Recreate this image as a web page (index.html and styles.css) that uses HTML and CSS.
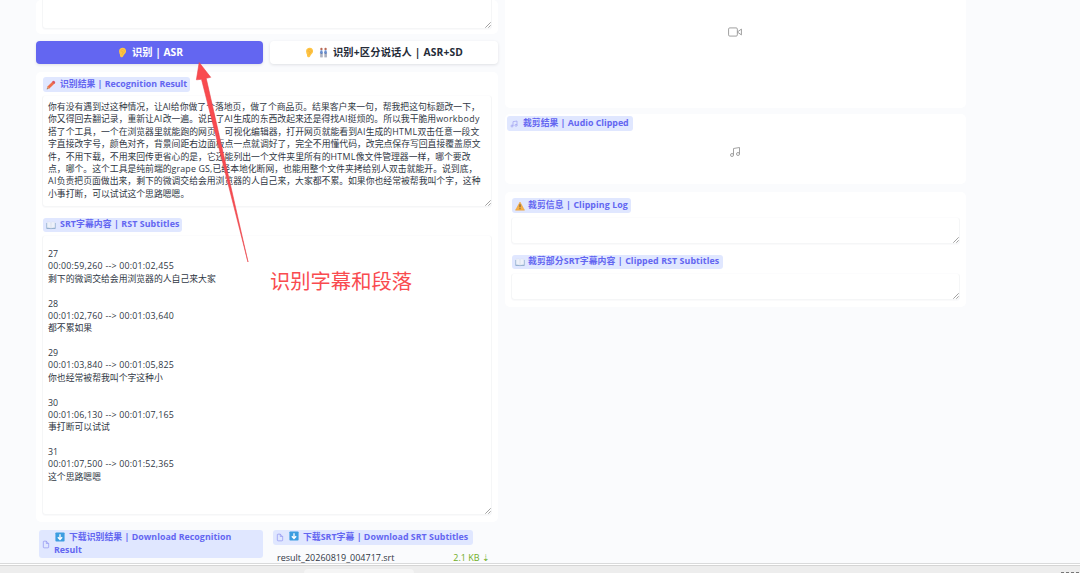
FILE: index.html
```html
<!DOCTYPE html>
<html lang="zh-CN">
<head>
<meta charset="utf-8">
<title>ASR</title>
<link rel="stylesheet" href="styles.css">
</head>
<body>
<svg class="defs" aria-hidden="true">
  <symbol id="ear" viewBox="0 0 10 12"><path d="M1.2 5C1 2 3 .8 5.2.8 8 .8 9.3 2.8 8.9 5.2 8.5 7.3 6.8 7.8 6 9.5 5.4 11 4.1 11.7 3 11 1.6 10 2.8 8.4 1.7 7.3Z" fill="#ffc544"/><path d="M3 4.7C3.2 2 7.2 2 7 4.8 6.5 7 4.2 6.5 4.3 9M3.7 5c1.2-.7 2 .1 1.3 1.3" fill="none" stroke="#eda935" stroke-width=".7"/></symbol>
  <symbol id="pair" viewBox="0 0 10 12"><circle cx="2.7" cy="2" r="1.3" fill="#b86955"/><circle cx="7.3" cy="2" r="1.3" fill="#b86955"/><path d="M1.8 3.6h1.8l.9 3.2H3.8v1H1.7v-1H.8zM6.4 3.6h1.8l.9 3.2h-.7v1H6.3v-1h-.9z" fill="#6a8fce"/><path d="M2.1 7v4.4M3.4 7v4.4M6.7 7v4.4M8 7v4.4" stroke="#626983" stroke-width=".8"/></symbol>
  <symbol id="pencil" viewBox="0 0 12 12"><path d="m1 11 .8-3.2L8.2 1.4l2.4 2.4-6.5 6.4z" fill="#ef704b"/><path d="m7.3 2.3 1.2-1.2q.7-.5 1.3.1l1 1q.6.6.1 1.2L9.8 4.7z" fill="#d95663"/><path d="m1 11 .8-3.2 2.3 2.4z" fill="#d8aa83"/><path d="m1 11 .3-1.2.9.9z" fill="#444"/></symbol>
  <symbol id="book" viewBox="0 0 12 12"><path d="M.6 3.5v7h4.5l.9.7.9-.7h4.5v-7" fill="#7399bd"/><path d="M1.3 2.3h3.2Q6 2.3 6 3.8v6.2Q5 9.3 1.3 9.4zM10.7 2.3H7.5Q6 2.3 6 3.8v6.2Q7 9.3 10.7 9.4z" fill="#edf1fa" stroke="#d3daea" stroke-width=".4"/></symbol>
  <symbol id="warning" viewBox="0 0 12 12"><path d="M6 1.2 11.4 11H.6z" fill="#f7b044" stroke="#e89d38" stroke-width=".6" stroke-linejoin="round"/><path d="M6 4v3.6M6 8.7v1.1" stroke="#4d4546" stroke-width="1.1"/></symbol>
  <symbol id="down" viewBox="0 0 12 12"><rect x=".5" y=".5" width="11" height="11" rx="1" fill="#3c9de0"/><path d="M6 2.6v6.2M3.4 6.3 6 9l2.6-2.7" fill="none" stroke="#fff" stroke-width="1.6"/></symbol>
  <symbol id="file" viewBox="0 0 24 24"><path d="M13 2H6a2 2 0 0 0-2 2v16a2 2 0 0 0 2 2h12a2 2 0 0 0 2-2V9zM13 2v7h7" fill="none" stroke="currentColor" stroke-width="2"/></symbol>
  <symbol id="music" viewBox="0 0 24 24"><path d="M9 18V5l12-2v13" fill="none" stroke="currentColor" stroke-width="1.8"/><circle cx="6" cy="18" r="3" fill="none" stroke="currentColor" stroke-width="1.8"/><circle cx="18" cy="16" r="3" fill="none" stroke="currentColor" stroke-width="1.8"/></symbol>
  <symbol id="video" viewBox="0 0 24 24"><path d="m23 7-7 5 7 5zM3 5h11a2 2 0 0 1 2 2v10a2 2 0 0 1-2 2H3a2 2 0 0 1-2-2V7a2 2 0 0 1 2-2z" fill="none" stroke="currentColor" stroke-width="1.6" stroke-linejoin="round"/></symbol>
  <symbol id="grip" viewBox="0 0 6 6"><path d="M.3 5.7 5.7.3M3.3 5.7 5.7 3.3" stroke="#777" stroke-width=".7"/></symbol>
</svg>
<div class="app">
  <main class="columns">
    <section class="column left">
      <div class="panel top-panel"><div class="box"><svg class="grip"><use href="#grip"/></svg></div></div>
      <div class="buttons">
        <button class="btn primary"><svg class="emoji"><use href="#ear"/></svg><span>识别 | ASR</span></button>
        <button class="btn speakers"><svg class="emoji"><use href="#ear"/></svg><svg class="emoji pair"><use href="#pair"/></svg><span class="wide-label">识别+区分说话人 | ASR+SD</span></button>
      </div>
      <div class="panel results">
        <h2 class="tag w-result"><svg><use href="#pencil"/></svg><span>识别结果 | Recognition Result</span></h2>
        <div class="box transcript">
          <p>你有没有遇到过这种情况，让AI给你做了个落地页，做了个商品页。结果客户来一句，帮我把这句标题改一下，</p>
          <p>你又得回去翻记录，重新让<i>AI</i>改一遍。说白了<i>AI</i>生成的东西改起来还是得找<i>AI</i>挺烦的。所以我干脆用<i>workbody</i></p>
          <p>搭了个工具，一个在浏览器里就能跑的网页，可视化编辑器，打开网页就能看到<i>AI</i>生成的<i>HTML</i>双击任意一段文</p>
          <p>字直接改字号，颜色对齐，背景间距右边面板点一点就调好了，完全不用懂代码，改完点保存写回直接覆盖原文</p>
          <p>件，不用下载，不用来回传更省心的是，它还能列出一个文件夹里所有的<i>HTML</i>像文件管理器一样，哪个要改</p>
          <p>点，哪个。这个工具是纯前端的<i class="narrow">grape GS,</i>已经本地化断网，也能用整个文件夹拷给别人双击就能开。说到底，</p>
          <p><i>AI</i>负责把页面做出来，剩下的微调交给会用浏览器的人自己来，大家都不累。如果你也经常被帮我叫个字，这种</p>
          <p>小事打断，可以试试这个思路嗯嗯。</p>
          <svg class="grip"><use href="#grip"/></svg>
        </div>
        <h2 class="tag w-srt"><svg><use href="#book"/></svg><span>SRT字幕内容 | RST Subtitles</span></h2>
        <div class="box subtitles">
          <div class="cue"><p>27</p><p class="time">00:00:59,260 --&gt; 00:01:02,455</p><p>剩下的微调交给会用浏览器的人自己来大家</p></div>
          <div class="cue"><p>28</p><p class="time">00:01:02,760 --&gt; 00:01:03,640</p><p>都不累如果</p></div>
          <div class="cue"><p>29</p><p class="time">00:01:03,840 --&gt; 00:01:05,825</p><p>你也经常被帮我叫个字这种小</p></div>
          <div class="cue"><p>30</p><p class="time">00:01:06,130 --&gt; 00:01:07,165</p><p>事打断可以试试</p></div>
          <div class="cue"><p>31</p><p class="time">00:01:07,500 --&gt; 00:01:52,365</p><p>这个思路嗯嗯</p></div>
          <svg class="grip"><use href="#grip"/></svg>
        </div>
      </div>
      <div class="downloads">
        <div class="download multi"><svg class="file"><use href="#file"/></svg><h2><svg class="down"><use href="#down"/></svg>下载识别结果 | Download Recognition<br>Result</h2></div>
        <div>
          <div class="download single"><svg class="file"><use href="#file"/></svg><h2><svg class="down"><use href="#down"/></svg>下载SRT字幕 | Download SRT Subtitles</h2></div>
          <div class="file-row"><span>result_20260819_004717.srt</span><span class="size">2.1 KB ⇣</span></div>
        </div>
      </div>
    </section>
    <section class="column right">
      <div class="panel video"><svg><use href="#video"/></svg></div>
      <div class="panel audio"><h2 class="tag w-audio"><svg><use href="#music"/></svg><span>裁剪结果 | Audio Clipped</span></h2><svg class="note"><use href="#music"/></svg></div>
      <div class="panel logs">
        <h2 class="tag w-log"><svg><use href="#warning"/></svg><span>裁剪信息 | Clipping Log</span></h2>
        <div class="box"><svg class="grip"><use href="#grip"/></svg></div>
        <h2 class="tag w-clip"><svg><use href="#book"/></svg><span>裁剪部分SRT字幕内容 | Clipped RST Subtitles</span></h2>
        <div class="box"><svg class="grip"><use href="#grip"/></svg></div>
      </div>
    </section>
  </main>
  <footer class="taskbar"><div class="task"></div><div class="clock"></div></footer>
  <svg class="arrow" viewBox="0 0 60 205"><path d="m8.2 4.5 11.5 14.8-4.5 1L57 204 10.5 21.3l-5.1.5z" fill="#f94b4f" stroke="#e94349" stroke-width=".6"/></svg>
  <div class="annotation">识别字幕和段落</div>
</div>
</body>
</html>
```
FILE: styles.css
```css
* { box-sizing: border-box; }
body { margin: 0; overflow: hidden; background: #fafbfd; color: #303744; font: 8.84px/12.375px "Open Sans", "Noto Sans CJK SC", sans-serif; }
h2, p { margin: 0; }
.defs { position: absolute; width: 0; height: 0; }
svg { flex: none; }
.app { position: relative; height: 573px; display: flex; flex-direction: column; }
.columns { display: grid; grid-template-columns: 462px 461px; gap: 7px; padding-left: 36px; height: 563px; overflow: hidden; }
.column { display: flex; flex-direction: column; }
.panel { background: #fff; border-radius: 5px; }
.box { position: relative; border: 1px solid #f5f6f7; border-top-color: #fcfcfd; border-radius: 4px; background: #fff; box-shadow: 0 1px 1px #fafafb; }
.grip { position: absolute; right: 0; bottom: 0; width: 6px; height: 6px; }
.top-panel { height: 34px; padding: 0 6px; }
.top-panel .box { height: 29px; border-top: 0; border-radius: 0 0 4px 4px; }
.buttons { display: grid; grid-template-columns: 227px 228px; gap: 7px; height: 24px; margin-top: 7px; }
.btn { display: flex; align-items: center; justify-content: center; gap: 5px; height: 23px; padding: 0 0 1px; border: 0; border-radius: 4px; background: #fff; color: #252b38; font: 700 10.25px/16px "Open Sans", "Noto Sans CJK SC", sans-serif; box-shadow: 0 1px 3px #dfe1e5; white-space: nowrap; }
.primary { color: #fff; background: #6366f1; padding-left: 2px; }
.speakers { letter-spacing: .18px; }
.emoji { width: 9px; height: 11px; }
.results { margin-top: 7px; height: 450px; padding: 5px 6px 0; }
.tag { display: flex; align-items: center; gap: 4px; height: 15px; padding: 0 3px; border-radius: 3px; background: #e0e7ff; color: #6366f1; font-weight: 700; font-size: 8.84px; line-height: 13px; white-space: nowrap; }
.tag span { padding-bottom: 1px; }
.tag svg { width: 10px; height: 10px; }
.w-result { width: 147px; margin-left: 1px; }
.w-srt { width: 139px; height: 14px; margin: 11px 0 0 1px; letter-spacing: .08px; }
.transcript { height: 112px; margin-top: 3px; padding: 5px; white-space: nowrap; }
.transcript i { font-style: normal; letter-spacing: .32px; }
.transcript .narrow { letter-spacing: .15px; }
.subtitles { height: 280px; margin-top: 3px; padding: 12px 5px; }
.cue { height: 49.5px; }
.time { letter-spacing: .21px; }
.downloads { display: grid; grid-template-columns: 224px 219px; gap: 10px; padding-left: 3px; margin-top: 8px; }
.download { display: flex; align-items: center; gap: 4px; padding: 0 3px; border-radius: 3px; background: #e0e7ff; color: #6366f1; }
.download h2 { padding-bottom: 1px; font-weight: 700; font-size: 8.84px; line-height: 12.4px; letter-spacing: .03px; white-space: nowrap; }
.multi { height: 28px; }
.single { width: 200px; height: 15px; }
.file { width: 8px; height: 9px; color: #8c8ff0; }
.down { width: 10px; height: 10px; margin: 0 4px 0 1px; vertical-align: -1.5px; }
.file-row { display: flex; justify-content: space-between; padding: 7px 2px 0 4px; font-size: 9px; }
.size { color: #71ad26; }
.video { height: 108px; padding: 25px 2px 0 0; text-align: center; border-radius: 0 0 5px 5px; }
.video svg { width: 14px; height: 14px; color: #999; }
.audio { height: 70px; margin-top: 6px; padding: 2px 2px 0 0; text-align: center; }
.audio .tag { width: 126px; margin-left: 2px; }
.audio .tag svg { width: 8px; height: 8px; color: #9395ee; }
.audio .tag span { padding-left: 1px; }
.note { width: 12px; height: 12px; margin-top: 15px; color: #999; }
.logs { height: 115px; margin-top: 8px; padding: 6px 6px 0; }
.logs .tag { margin-left: 1px; gap: 3px; letter-spacing: .09px; }
.w-log { width: 119px; }
.w-clip { width: 211px; height: 14px; margin-top: 11px; }
.logs .box { height: 27px; margin-top: 4px; }
.taskbar { height: 10px; border-top: 1px solid #d9dadb; background: #ededed; box-shadow: inset 0 1px #fff, inset 0 2px #d5d5d5; display: flex; justify-content: space-between; align-items: flex-end; padding: 0 0 0 304px; }
.task { width: 110px; height: 4px; border-radius: 4px 4px 0 0; background: #f5f5f5; }
.clock { width: 19px; height: 1px; background: repeating-linear-gradient(90deg, #777 0 3px, #ededed 3px 5px); }
.arrow { position: absolute; left: 191px; top: 58px; width: 60px; height: 205px; }
.annotation { position: absolute; left: 270px; top: 265px; color: #f94b4f; font: 20.3px/30px "Noto Sans CJK SC", sans-serif; white-space: nowrap; }
```
